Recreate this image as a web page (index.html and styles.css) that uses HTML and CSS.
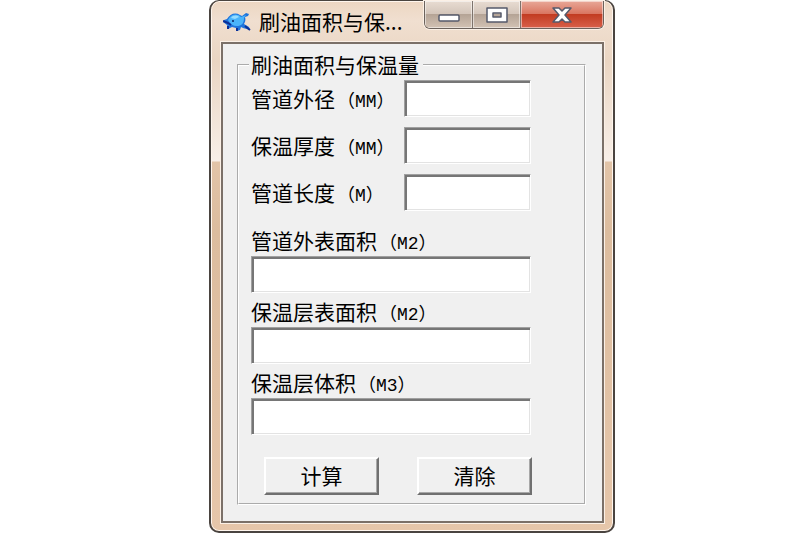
FILE: index.html
```html
<!DOCTYPE html>
<html lang="zh-CN">
<head>
    <meta charset="UTF-8">
    <meta name="viewport" content="width=device-width, initial-scale=1.0">
    <title>刷油面积与保温量</title>
    <link rel="stylesheet" href="styles.css">
</head>
<body>

    <div class="window">
        <div class="titlebar">
            <svg class="logo" viewBox="0 0 28 20">
                <path d="M4 7 C7 2 12 0 17 3 L19 4 L23 1 L26 2 L25 4 L22 5 C23 8 22 10 21 12 L26 15 L27 18 L20 16 L18 15 L17 18 L14 19 L13 16 L9 15 L5 17 L4 13 L0 10 L1 8 Z" fill="#1f74dc"/>
                <path d="M5 8 C8 2 14 1 18 5 L23 3 L21 6 C21 12 18 14 14 14 C10 14 7 12 5 8 Z" fill="#4ab4fa"/>
                <path d="M8 6 C10 3 14 3 16 5 L12 7 Z" fill="#96dcff"/>
                <path d="M0 9 L5 11 L8 13 M5 14 L5 17 M14 16 L14 19 M22 14 L27 18" fill="none" stroke="#0c2f96" stroke-width="2"/>
                <circle cx="10" cy="9" r="1" fill="#082060"/>
            </svg>
            <h1 class="title">刷油面积与保...</h1>
            <div class="controls">
                <button type="button" class="ctrl min" aria-label="最小化">
                    <svg width="22" height="8" viewBox="0 0 22 8"><rect x="1" y="1" width="20" height="6" rx="1" fill="#fff" stroke="#555a6b" stroke-width="1.5"/></svg>
                </button>
                <button type="button" class="ctrl max" aria-label="最大化">
                    <svg width="22" height="16" viewBox="0 0 22 16"><path d="M1 1 H21 V15 H1 Z M7 6 H15 V10 H7 Z" fill="#fff" fill-rule="evenodd" stroke="#555a6b" stroke-width="1.5" stroke-linejoin="round"/></svg>
                </button>
                <button type="button" class="ctrl close" aria-label="关闭">
                    <svg width="20" height="16" viewBox="0 0 20 16"><path d="M1 1 H7 L10 4 L13 1 H19 L13 8 L19 15 H13 L10 12 L7 15 H1 L7 8 Z" fill="#fff" stroke="#555a6b" stroke-width="1.5" stroke-linejoin="round"/></svg>
                </button>
            </div>
        </div>

        <form class="client">
            <fieldset class="group">
                <legend>刷油面积与保温量</legend>

                <div class="row">
                    <label for="diameter">管道外径<span>（MM）</span></label>
                    <input type="text" id="diameter" class="inputTxt">
                </div>
                <div class="row">
                    <label for="thickness">保温厚度<span>（MM）</span></label>
                    <input type="text" id="thickness" class="inputTxt">
                </div>
                <div class="row">
                    <label for="pipeLength">管道长度<span>（M）</span></label>
                    <input type="text" id="pipeLength" class="inputTxt">
                </div>

                <div class="results">
                    <label for="pipeArea">管道外表面积<span>（M2）</span></label>
                    <input type="text" id="pipeArea" class="inputTxt">
                    <label for="layerArea">保温层表面积<span>（M2）</span></label>
                    <input type="text" id="layerArea" class="inputTxt">
                    <label for="layerVolume">保温层体积<span>（M3）</span></label>
                    <input type="text" id="layerVolume" class="inputTxt">
                </div>

                <div class="buttons">
                    <button type="button" class="btn">计算</button>
                    <button type="reset" class="btn">清除</button>
                </div>
            </fieldset>
        </form>
    </div>

</body>
</html>
```
FILE: styles.css
```css
*{
    margin: 0;
    padding: 0;
    box-sizing: border-box;
}

body{
    background: #fff;
    padding-left: 24px;
    font-family: "Noto Sans CJK SC", sans-serif;
    font-size: 21px;
    line-height: 28px;
    color: #000;
}

.window{
    width: 100%;
    max-width: 406px;
    margin: 0 auto;
    padding: 0 9px 8px 10px;
    border: 2px solid #4a4440;
    border-top-width: 1px;
    border-radius: 10px;
    background: linear-gradient(#ecd6c2 0, #f0dfd0 20px, #ead5c2 60px, #f8efe8 160px, #e2c4a8 161px, #dcbc9e 230px, #e6c6aa 100%);
    box-shadow: inset 0 0 0 1px #fff6ee;
}

.titlebar{
    display: flex;
    align-items: center;
    height: 41px;
}

.logo{
    width: 28px;
    height: 20px;
    flex: none;
    margin-left: 2px;
}

.title{
    flex: 1;
    margin-left: 8px;
    padding-bottom: 2px;
    font-size: 21px;
    font-weight: normal;
    white-space: nowrap;
}

.controls{
    display: flex;
    align-self: flex-start;
    height: 28px;
    border: 1px solid #6b625c;
    border-top: none;
    border-radius: 0 0 6px 6px;
    overflow: hidden;
    box-shadow: 0 0 0 1px #fbf0e6;
}

.ctrl{
    display: flex;
    align-items: center;
    justify-content: center;
    width: 48px;
    border: none;
    border-right: 1px solid #7d736c;
    background: linear-gradient(#e8dcd2, #d3c5ba 48%, #b5a496 50%, #d2c2b4);
    box-shadow: inset 0 0 0 1px rgba(255, 255, 255, 0.5);
}

.min{
    padding-top: 7px;
}

.close{
    width: 82px;
    border-right: none;
    background: linear-gradient(#e8a898, #d97560 48%, #c23c22 50%, #d8604a);
}

.client{
    display: block;
    padding: 8px 16px 16px 14px;
    border: 2px solid #7b7068;
    background: #f0f0f0;
    box-shadow: 0 0 0 1px #fbf0e6;
}

.group{
    min-width: 0;
    padding: 2px 53px 8px 12px;
    border: 2px groove #fff;
}

legend{
    margin-left: -2px;
    padding: 0 4px 2px 2px;
    line-height: 24px;
}

/* units are set smaller than the label text */
label span{
    margin-left: 2px;
    font-family: "Liberation Mono", "Noto Sans CJK SC", monospace;
    font-size: 18px;
}

.row{
    display: flex;
    align-items: center;
    justify-content: space-between;
    margin-bottom: 10px;
}

.row label{
    padding-top: 3px;
}

.inputTxt{
    display: block;
    width: 100%;
    height: 37px;
    padding: 2px 4px;
    border: 1px solid;
    border-color: #a0a0a0 #fff #fff #a0a0a0;
    background: #fff;
    box-shadow: inset 2px 2px #767676, inset -1px -1px #e3e3e3;
    font-family: inherit;
    font-size: 18px;
}

.row .inputTxt{
    width: 127px;
}

.results{
    padding-top: 7px;
}

.results label{
    display: block;
    height: 28px;
    line-height: 24px;
}

.results .inputTxt{
    margin-bottom: 6px;
}

.buttons{
    display: flex;
    gap: 38px;
    margin-top: 22px;
    padding-left: 13px;
}

.btn{
    width: 115px;
    height: 38px;
    flex: none;
    padding-bottom: 3px;
    border: 2px solid;
    border-color: #fff #707070 #707070 #fff;
    background: #f0f0f0;
    box-shadow: inset -1px -1px #a8a8a8;
    font-family: inherit;
    font-size: 21px;
    line-height: 28px;
    color: #000;
}
```
